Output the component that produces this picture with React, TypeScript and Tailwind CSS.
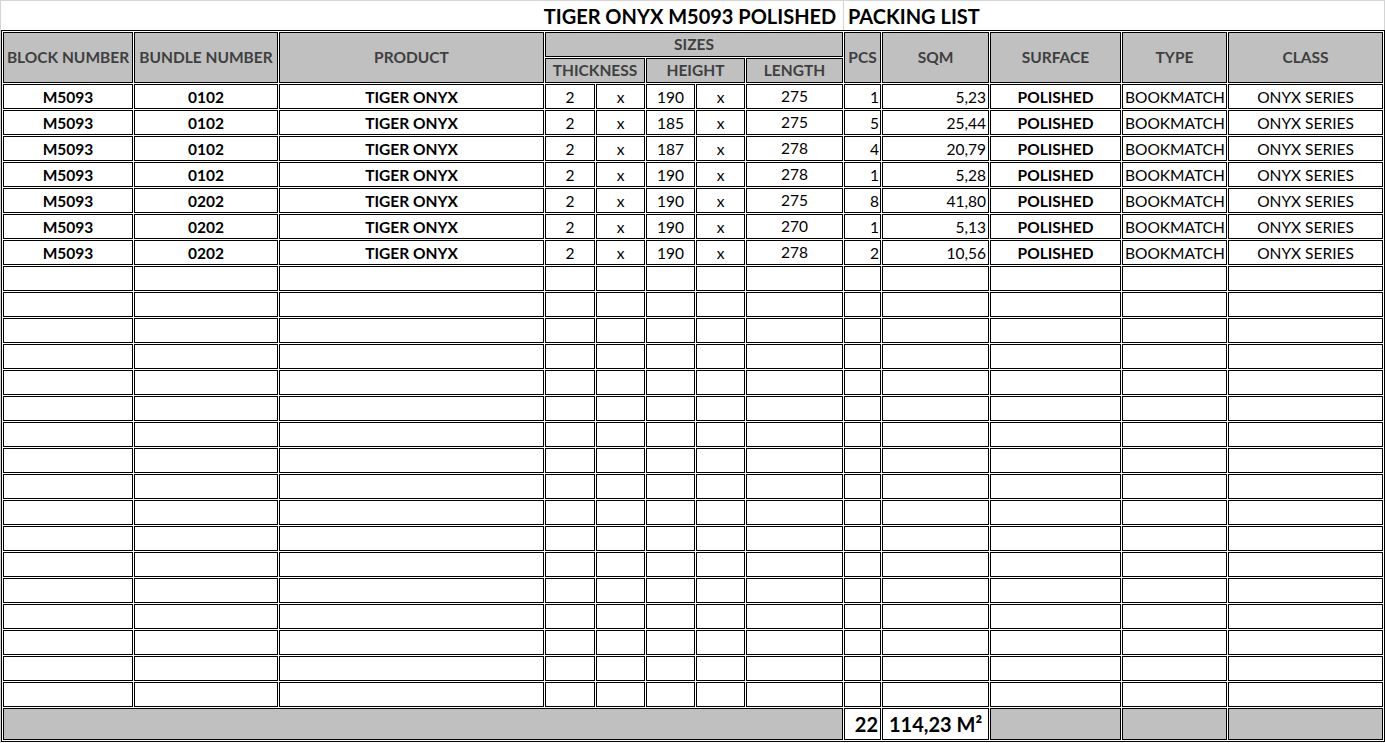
import React from "react";

const rows = [
  ["M5093", "0102", "TIGER ONYX", "2", "190", "275", "1", "5,23"],
  ["M5093", "0102", "TIGER ONYX", "2", "185", "275", "5", "25,44"],
  ["M5093", "0102", "TIGER ONYX", "2", "187", "278", "4", "20,79"],
  ["M5093", "0102", "TIGER ONYX", "2", "190", "278", "1", "5,28"],
  ["M5093", "0202", "TIGER ONYX", "2", "190", "275", "8", "41,80"],
  ["M5093", "0202", "TIGER ONYX", "2", "190", "270", "1", "5,13"],
  ["M5093", "0202", "TIGER ONYX", "2", "190", "278", "2", "10,56"],
];

const cell = "border border-black bg-white flex items-center overflow-hidden whitespace-nowrap";
const dcell = `${cell} pt-[2px]`;
const hdr =
  "border border-black bg-[#c0c0c0] flex items-center justify-center font-bold text-[#3f3f3f] whitespace-nowrap overflow-hidden";

export default function App() {
  const empty = Array.from({ length: 17 });
  return (
    <div
      className="w-[1385px] h-[743px] bg-white border-l border-[#d4d4d4] overflow-hidden text-black"
      style={{ fontFamily: "Lato, 'Noto Sans', sans-serif" }}
    >
      {/* title row */}
      <div className="h-[30px] border-t border-[#d4d4d4] flex">
        <div className="w-[544px]" />
        <div className="w-[298px] flex items-center justify-center pr-[8px] pt-[1px] text-[20px] font-bold whitespace-nowrap">
          TIGER ONYX M5093 POLISHED
        </div>
        <div className="w-[1px] bg-[#d4d4d4]" />
        <div className="w-[540px] flex items-center pl-[4px] pt-[1px] text-[20px] font-bold whitespace-nowrap">
          PACKING LIST
        </div>
        <div className="w-[1px] bg-[#d4d4d4]" />
      </div>

      {/* table */}
      <div className="w-[1384px] border border-black p-[1px] bg-white grid gap-[1px] grid-cols-[130px_144px_265px_50px_49px_49px_49px_97px_37px_107px_131px_105px_155px] grid-rows-[25px_25px_repeat(24,25px)_32px] text-[15.5px]">
        {/* header */}
        <div className={`${hdr} row-span-2`}>BLOCK NUMBER</div>
        <div className={`${hdr} row-span-2`}>BUNDLE NUMBER</div>
        <div className={`${hdr} row-span-2`}>PRODUCT</div>
        <div className={`${hdr} col-span-5`}>SIZES</div>
        <div className={`${hdr} row-span-2`}>PCS</div>
        <div className={`${hdr} row-span-2`}>SQM</div>
        <div className={`${hdr} row-span-2`}>SURFACE</div>
        <div className={`${hdr} row-span-2`}>TYPE</div>
        <div className={`${hdr} row-span-2`}>CLASS</div>
        <div className={`${hdr} col-span-2`}>THICKNESS</div>
        <div className={`${hdr} col-span-2`}>HEIGHT</div>
        <div className={hdr}>LENGTH</div>

        {/* data */}
        {rows.map((r, i) => (
          <React.Fragment key={i}>
            <div className={`${dcell} justify-center font-bold`}>{r[0]}</div>
            <div className={`${dcell} justify-center font-bold`}>{r[1]}</div>
            <div className={`${dcell} justify-center font-bold`}>{r[2]}</div>
            <div className={`${dcell} justify-center`}>{r[3]}</div>
            <div className={`${dcell} justify-center`}>x</div>
            <div className={`${dcell} justify-center`}>{r[4]}</div>
            <div className={`${dcell} justify-center`}>x</div>
            <div className={`${cell} justify-center`}>{r[5]}</div>
            <div className={`${dcell} justify-end pr-[1px]`}>{r[6]}</div>
            <div className={`${dcell} justify-end pr-[2px]`}>{r[7]}</div>
            <div className={`${dcell} justify-center font-bold`}>POLISHED</div>
            <div className={`${dcell} justify-start pl-[2px]`}>BOOKMATCH</div>
            <div className={`${dcell} justify-center`}>ONYX SERIES</div>
          </React.Fragment>
        ))}
        {empty.map((_, i) => (
          <React.Fragment key={`e${i}`}>
            {Array.from({ length: 13 }).map((__, j) => (
              <div key={j} className={cell} />
            ))}
          </React.Fragment>
        ))}

        {/* footer */}
        <div className="col-span-8 border border-black bg-[#c0c0c0]" />
        <div className={`${cell} justify-end pr-[2px] text-[20px] font-bold`}>22</div>
        <div className={`${cell} justify-center text-[20px] font-bold`}>114,23 M²</div>
        <div className="border border-black bg-[#c0c0c0]" />
        <div className="border border-black bg-[#c0c0c0]" />
        <div className="border border-black bg-[#c0c0c0]" />
      </div>
    </div>
  );
}
